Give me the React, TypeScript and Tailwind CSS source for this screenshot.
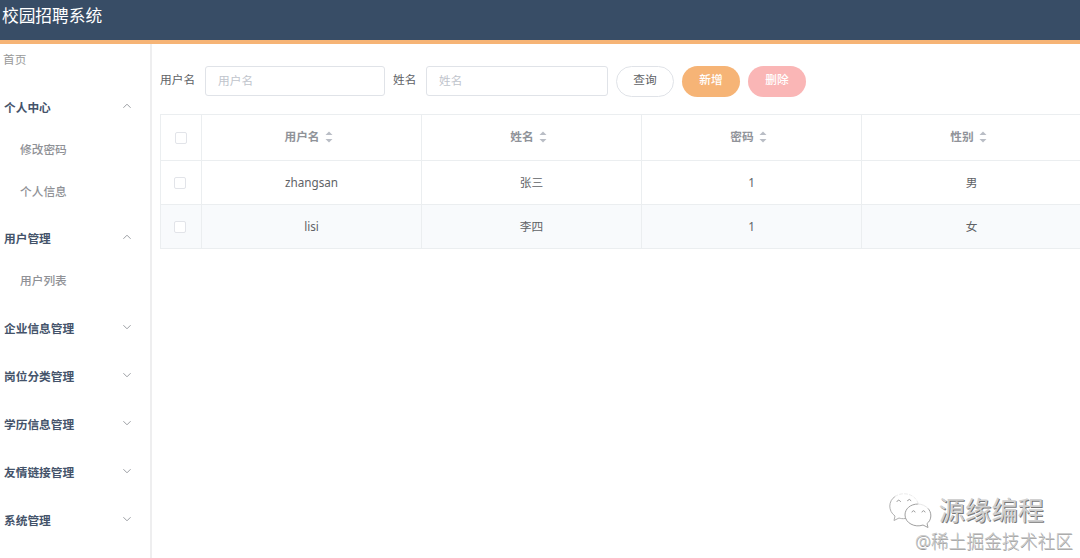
import { useState } from "react"

type MenuGroup = {
  title: string
  children: string[]
  open: boolean
  spacing: string
}

const menu: MenuGroup[] = [
  { title: "个人中心", children: ["修改密码", "个人信息"], open: true, spacing: "mt-[11px]" },
  { title: "用户管理", children: ["用户列表"], open: true, spacing: "mt-1" },
  { title: "企业信息管理", children: [], open: false, spacing: "mt-[5px]" },
  { title: "岗位分类管理", children: [], open: false, spacing: "mt-[5px]" },
  { title: "学历信息管理", children: [], open: false, spacing: "mt-[5px]" },
  { title: "友情链接管理", children: [], open: false, spacing: "mt-[5px]" },
  { title: "系统管理", children: [], open: false, spacing: "mt-[5px]" }
]

const columns = ["用户名", "姓名", "密码", "性别"]

const users = [
  { username: "zhangsan", name: "张三", password: "1", gender: "男" },
  { username: "lisi", name: "李四", password: "1", gender: "女" }
]

function Chevron({ up }: { up: boolean }) {
  return (
    <svg width="8" height="6" viewBox="0 0 8 6" fill="none" stroke="#909399" strokeWidth="0.9">
      <path d={up ? "M0.4 4.8 L4 1.2 L7.6 4.8" : "M0.4 1.2 L4 4.8 L7.6 1.2"} />
    </svg>
  )
}

function SortIcon() {
  return (
    <svg width="8" height="12" viewBox="0 0 8 12" fill="#b9bdc5">
      <path d="M0.5 4 L4 0.6 L7.5 4 Z" />
      <path d="M0.5 8 L4 11.4 L7.5 8 Z" />
    </svg>
  )
}

function Checkbox({ className = "" }: { className?: string }) {
  return <span className={`block size-3 rounded-[2px] border border-[#e2e4e9] bg-white ${className}`} />
}

function Sidebar() {
  const [groups, setGroups] = useState(menu)

  const toggle = (title: string) =>
    setGroups(gs => gs.map(g => (g.title === title ? { ...g, open: !g.open } : g)))

  return (
    <aside className="w-[152px] shrink-0 border-r-2 border-[#eeeeef]">
      <div className="h-[31px] pl-[3px] leading-[31px] text-[#999999]">首页</div>
      {groups.map(g => (
        <div key={g.title} className={g.spacing}>
          <button
            onClick={() => toggle(g.title)}
            className="flex h-[43px] w-full items-center justify-between pl-1 pr-[19px] font-semibold text-[#44536a]"
          >
            {g.title}
            <span className="-mt-[3px]">
              <Chevron up={g.open} />
            </span>
          </button>
          {g.open &&
            g.children.map(c => (
              <div key={c} className="h-[42px] pl-5 font-medium leading-[41px] text-[#8f9196]">
                {c}
              </div>
            ))}
        </div>
      ))}
    </aside>
  )
}

function Toolbar() {
  return (
    <div className="flex h-[31px] items-start text-[#606266]">
      <label className="w-[45px] leading-[27px]">用户名</label>
      <input
        className="mr-2 h-[30px] w-[180px] rounded-[3px] border border-[#e0e3e8] px-3 pb-[3px] outline-none placeholder:text-[#c0c4cc]"
        placeholder="用户名"
      />
      <label className="w-[33px] leading-[27px]">姓名</label>
      <input
        className="mr-2 h-[30px] w-[182px] rounded-[3px] border border-[#e0e3e8] px-3 pb-[3px] outline-none placeholder:text-[#c0c4cc]"
        placeholder="姓名"
      />
      <div className="flex gap-2">
        <button className="h-[31px] w-[58px] rounded-full border border-[#e0e3e8] pb-[3px]">查询</button>
        <button className="h-[31px] w-[58px] rounded-full bg-[#f6b476] pb-[3px] font-medium text-white">新增</button>
        <button className="h-[31px] w-[58px] rounded-full bg-[#fab6b6] pb-[3px] font-medium text-white">删除</button>
      </div>
    </div>
  )
}

function UserTable() {
  return (
    <table className="mt-[17px] w-[922px] table-fixed border-collapse text-center text-[#606266]">
      <colgroup>
        <col className="w-[41px]" />
        {columns.map(c => (
          <col key={c} />
        ))}
      </colgroup>
      <thead>
        <tr className="h-[46px] text-[#909399]">
          <th className="border border-[#ebeef0] p-0">
            <Checkbox className="ml-[14px]" />
          </th>
          {columns.map(c => (
            <th key={c} className="border border-[#ebeef0] p-0 font-semibold">
              <div className="flex items-center justify-center gap-[5px] pr-[6px]">
                <span className="-mt-[2px]">{c}</span>
                <SortIcon />
              </div>
            </th>
          ))}
        </tr>
      </thead>
      <tbody>
        {users.map((u, i) => (
          <tr key={u.username} className={i % 2 ? "h-11 bg-[#f8fafc]" : "h-11"}>
            <td className="border border-[#ebeef0] p-0">
              <Checkbox className="ml-[13px]" />
            </td>
            {[u.username, u.name, u.password, u.gender].map((v, j) => (
              <td key={j} className="border border-[#ebeef0] p-0">
                {v}
              </td>
            ))}
          </tr>
        ))}
      </tbody>
    </table>
  )
}

function Watermark() {
  return (
    <div className="pointer-events-none absolute bottom-[2px] right-[7px] flex flex-col items-end">
      <div className="-mb-[2px] mr-[29px] flex items-center gap-[6px]">
        <svg width="44" height="36" viewBox="0 0 44 36" fill="none" strokeWidth="1" strokeLinecap="round">
          <path d="M16.5 26.5 C13.5 27 11.5 26.5 10 26 L5 28.5 L6 24 C-1 19 -1 9 6 4.5" stroke="#b0b0b0" />
          <path d="M6 4.5 C14 -1 26 2 29 11" stroke="#ececec" strokeDasharray="3 2" />
          <path
            d="M29 12 C21 12 16 17 16 23 C16 31 26 36 34 33 L39 35.5 L38 31.5 C43 28 43 20 39 16.5"
            stroke="#a0a0a0"
          />
          <path d="M29 12 C33 12 37 14 39 16.5" stroke="#e8e8e8" />
          <path
            d="M8 9.5 Q9.5 6.5 11.5 9.5 M18.5 8.5 Q20.5 6 22 8.5 M23 20 Q24.5 17 26 20 M33 20 Q34.5 17 36 20"
            stroke="#999999"
          />
        </svg>
        <span className="text-[26.3px] leading-[35px] text-[#d0d0d0] [text-shadow:1px_1px_0.5px_#777777]">
          源缘编程
        </span>
      </div>
      <span className="text-[17.8px] font-light leading-[30px] text-[#c4c4c4] [text-shadow:0.5px_0.5px_0.5px_#999999]">
        @稀土掘金技术社区
      </span>
    </div>
  )
}

export default function App() {
  return (
    <div className="relative flex h-[558px] w-[1080px] flex-col overflow-hidden bg-white font-['Noto_Sans','Noto_Sans_CJK_SC',sans-serif] text-[11.7px]">
      <header className="h-11 shrink-0 border-b-4 border-[#f6b476] bg-[#384d66] pl-[2px] text-[16.7px] leading-[32px] text-white">
        校园招聘系统
      </header>
      <div className="flex min-h-0 flex-1">
        <Sidebar />
        <main className="min-w-0 flex-1 overflow-hidden pl-2 pt-[22px]">
          <Toolbar />
          <UserTable />
        </main>
      </div>
      <Watermark />
    </div>
  )
}
